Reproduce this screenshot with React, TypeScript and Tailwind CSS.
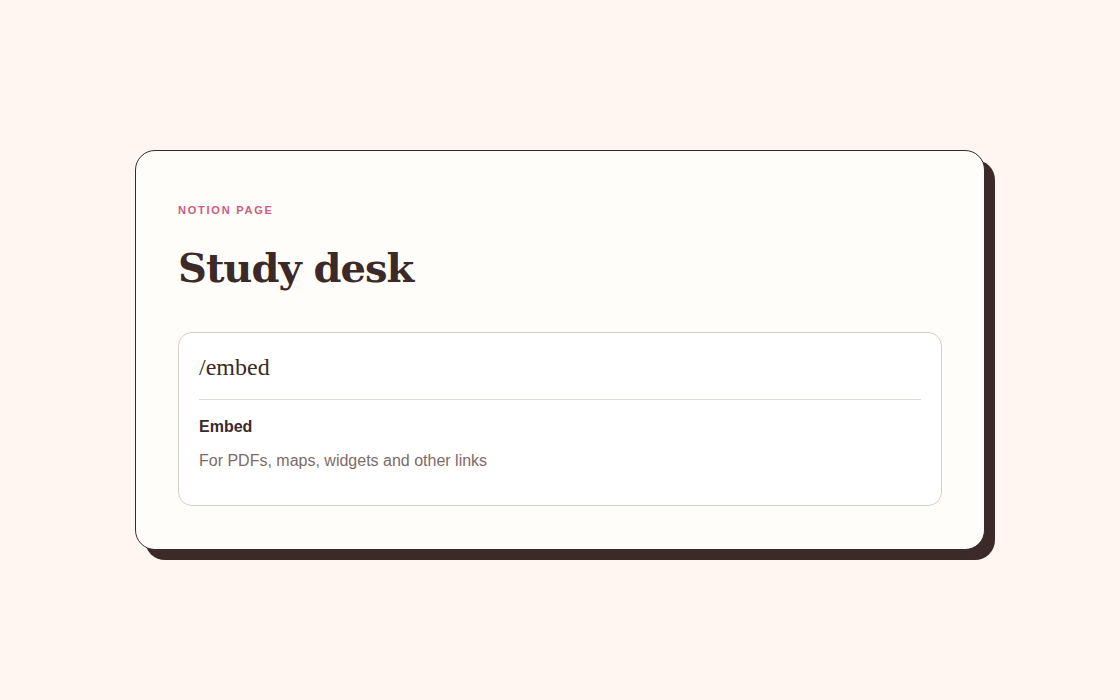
import React from 'react';

export default function App() {
  return (
    <div className="min-h-screen w-full bg-[#fff6f1] flex items-center justify-center">
      <div className="w-[850px] h-[400px] bg-[#fffdf9] border border-[#3b2a28] rounded-[20px] shadow-[10px_10px_0_#3b2a28] px-[42px] pt-[51px] pb-[42px] flex flex-col">
        <p
          className="text-[11px] leading-4 font-bold tracking-[0.16em] uppercase text-[#cf5a82]"
          style={{ fontFamily: '"Liberation Sans", Arial, sans-serif' }}
        >
          Notion page
        </p>
        <h1
          className="mt-[26px] text-[40px] leading-[48px] font-bold text-[#3b2a28] tracking-[-0.025em]"
          style={{ fontFamily: '"DejaVu Serif", Georgia, serif' }}
        >
          Study desk
        </h1>

        <div className="mt-[40px] border border-[#d8d0c4] rounded-[14px] bg-white px-5 pt-5 pb-[33px]">
          <div
            className="text-[24px] leading-7 text-[#3b2a28] pb-[18px] border-b border-[#e2dbd3]"
            style={{ fontFamily: '"Liberation Serif", Georgia, serif' }}
          >
            /embed
          </div>
          <div style={{ fontFamily: '"Liberation Sans", Arial, sans-serif' }}>
            <p className="mt-4 text-base leading-[22px] font-bold text-[#3b2a28]">Embed</p>
            <p className="mt-3 text-base leading-[22px] text-[#7d6b67]">
              For PDFs, maps, widgets and other links
            </p>
          </div>
        </div>
      </div>
    </div>
  );
}
